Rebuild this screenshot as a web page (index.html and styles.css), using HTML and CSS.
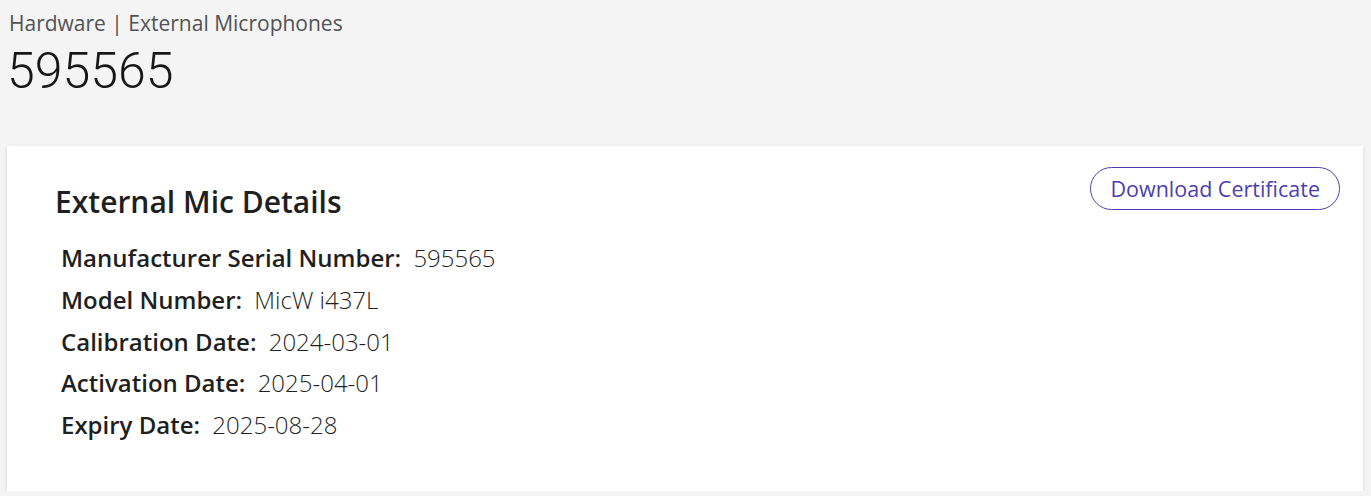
FILE: index.html
```html
<!DOCTYPE html>
<html lang="en">
<head>
    <meta charset="UTF-8">
    <meta name="viewport" content="width=device-width, initial-scale=1.0">
    <title>595565 - External Microphones</title>
    <link rel="stylesheet" href="styles.css">
</head>
<body>
    <div class="page-header">
        <div class="breadcrumb">Hardware | External Microphones</div>
        <h1 class="page-title">595565</h1>
    </div>

    <div class="card">
        <div class="card-top">
            <h2 class="card-title">External Mic Details</h2>
            <button class="outline-btn">Download Certificate</button>
        </div>
        <div class="detail-list">
            <div class="detail-row">
                <span class="detail-label">Manufacturer Serial Number:</span>
                <span class="detail-value">595565</span>
            </div>
            <div class="detail-row">
                <span class="detail-label">Model Number:</span>
                <span class="detail-value">MicW i437L</span>
            </div>
            <div class="detail-row">
                <span class="detail-label">Calibration Date:</span>
                <span class="detail-value">2024-03-01</span>
            </div>
            <div class="detail-row">
                <span class="detail-label">Activation Date:</span>
                <span class="detail-value">2025-04-01</span>
            </div>
            <div class="detail-row">
                <span class="detail-label">Expiry Date:</span>
                <span class="detail-value">2025-08-28</span>
            </div>
        </div>
    </div>
</body>
</html>
```

FILE: styles.css
```css
body {
    margin: 0;
    padding: 0;
    background: #f4f4f4;
    font-family: "Open Sans", Arial, sans-serif;
    color: #1f1f1f;
}

.page-header {
    padding: 8px 9px 0;
    height: 146px;
    box-sizing: border-box;
}

.breadcrumb {
    font-size: 21px;
    line-height: 30px;
    color: #525252;
}

.page-title {
    margin: 5px 0 0 -2px;
    font-family: Roboto, "Open Sans", sans-serif;
    font-weight: 300;
    font-size: 50px;
    line-height: 56px;
    color: #161616;
}

.card {
    margin: 0 8px 0 7px;
    background: #fff;
    box-shadow: 0 1px 4px rgba(0, 0, 0, 0.12);
    padding: 21px 23px 45px 48px;
}

.card-top {
    display: flex;
    justify-content: space-between;
    align-items: flex-start;
}

.card-title {
    margin: 15px 0 0;
    font-size: 30px;
    font-weight: 600;
    line-height: 40px;
    color: #1f1f1f;
}

.outline-btn {
    font-family: "Open Sans", Arial, sans-serif;
    font-size: 21.5px;
    color: #4c3fb0;
    background: #fff;
    border: 1px solid #4c3fb0;
    border-radius: 22px;
    height: 43px;
    padding: 0 19px;
    cursor: pointer;
}

.detail-list {
    margin-top: 15px;
    padding-left: 6px;
}

.detail-row {
    font-size: 24px;
    line-height: 41.75px;
}

.detail-label {
    font-weight: 600;
    margin-right: 6px;
}

.detail-value {
    font-weight: 300;
}
```
